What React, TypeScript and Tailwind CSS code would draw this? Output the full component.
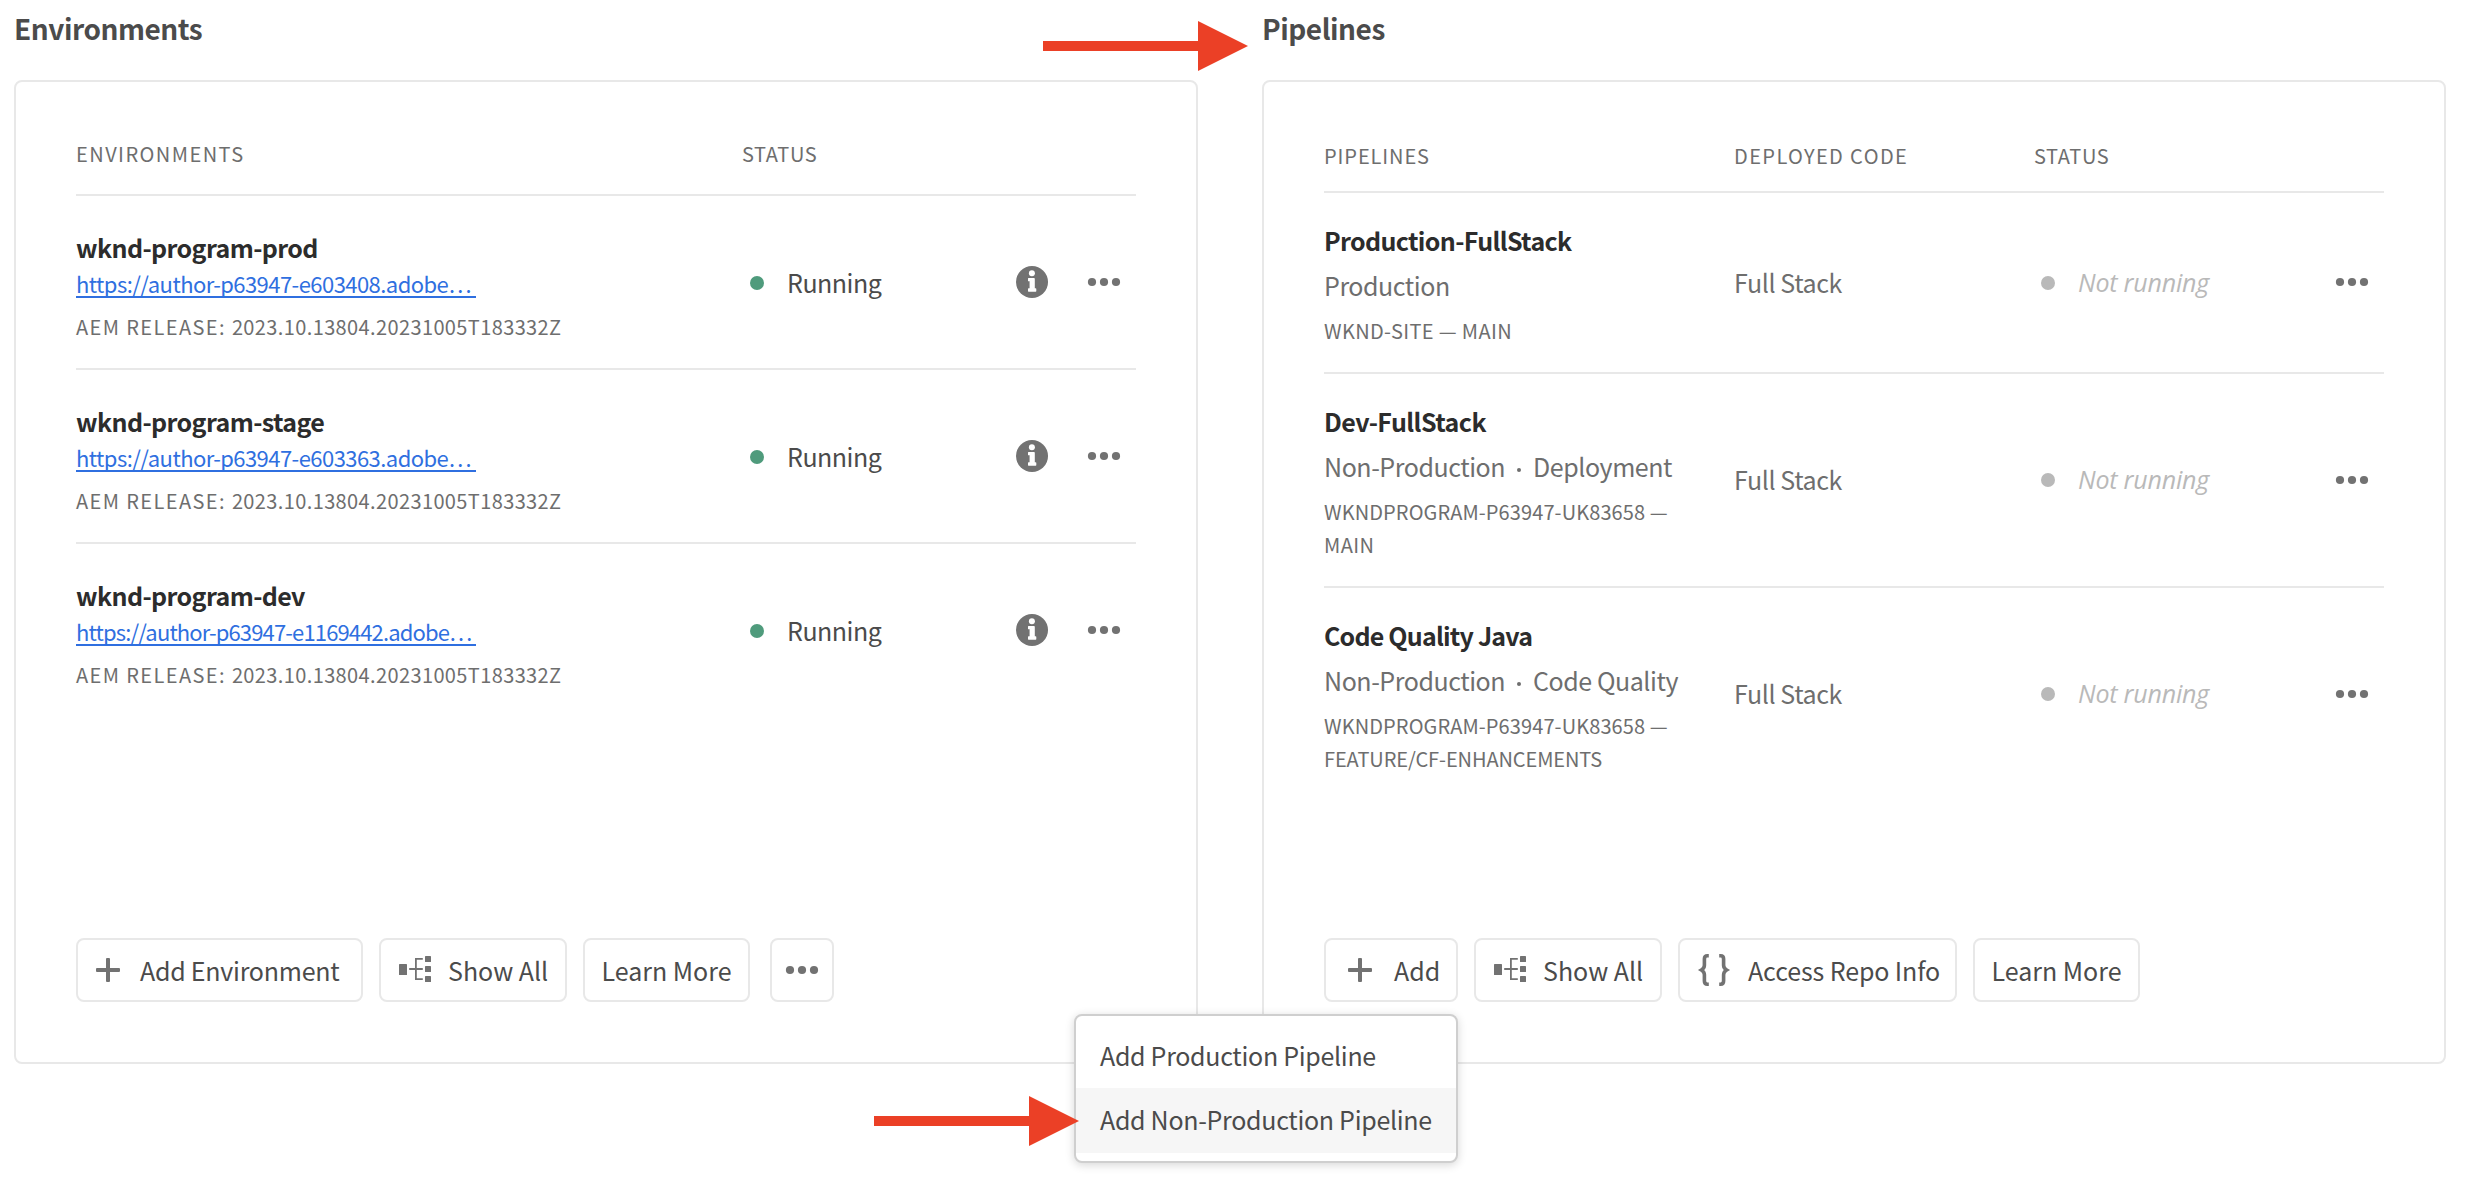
import type { ReactNode } from 'react';

const environments = [
  { name: 'wknd-program-prod', url: 'https://author-p63947-e603408.adobe…', urlTracking: 'tracking-[-0.55px]' },
  { name: 'wknd-program-stage', url: 'https://author-p63947-e603363.adobe…', urlTracking: 'tracking-[-0.55px]' },
  { name: 'wknd-program-dev', url: 'https://author-p63947-e1169442.adobe…', urlTracking: 'tracking-[-0.85px]' },
];

const pipelines = [
  {
    name: 'Production-FullStack',
    nameTracking: 'tracking-[-0.65px]',
    kind: ['Production'],
    repo: [{ text: 'WKND-SITE — MAIN', tracking: 'tracking-[0.35px]' }],
  },
  {
    name: 'Dev-FullStack',
    nameTracking: 'tracking-[-0.55px]',
    kind: ['Non-Production', 'Deployment'],
    repo: [
      { text: 'WKNDPROGRAM-P63947-UK83658 —', tracking: 'tracking-[0.1px]' },
      { text: 'MAIN', tracking: 'tracking-[0.4px]' },
    ],
  },
  {
    name: 'Code Quality Java',
    nameTracking: 'tracking-[-0.8px]',
    kind: ['Non-Production', 'Code Quality'],
    repo: [
      { text: 'WKNDPROGRAM-P63947-UK83658 —', tracking: 'tracking-[0.1px]' },
      { text: 'FEATURE/CF-ENHANCEMENTS', tracking: 'tracking-[-0.1px]' },
    ],
  },
];

function MoreIcon() {
  return (
    <svg width="32" height="8" viewBox="0 0 32 8" fill="#727272" className="shrink-0 overflow-visible">
      <circle cx="4" cy="4" r="4.1" />
      <circle cx="16" cy="4" r="4.1" />
      <circle cx="28" cy="4" r="4.1" />
    </svg>
  );
}

function InfoIcon() {
  return (
    <svg width="32" height="32" viewBox="0 0 32 32" className="shrink-0">
      <circle cx="16" cy="16" r="16" fill="#727272" />
      <circle cx="15.9" cy="7.3" r="3" fill="#fff" />
      <path
        d="M12.6 12h5.4a.8.8 0 0 1 .8.8v9.5h.9a.6.6 0 0 1 .6.6v2.2a.6.6 0 0 1-.6.6h-7.1a.6.6 0 0 1-.6-.6v-2.2a.6.6 0 0 1 .6-.6h1v-7h-1a.6.6 0 0 1-.6-.6v-2.1a.6.6 0 0 1 .6-.6z"
        fill="#fff"
      />
    </svg>
  );
}

function PlusIcon() {
  return (
    <svg width="36" height="36" viewBox="0 0 36 36" fill="#727272" className="shrink-0">
      <rect x="6" y="16" width="24" height="4" rx="1" />
      <rect x="16" y="6" width="4" height="24" rx="1" />
    </svg>
  );
}

function TreeIcon() {
  return (
    <svg width="36" height="36" viewBox="0 0 36 36" fill="#727272" className="shrink-0">
      <rect x="2" y="12" width="8" height="11" rx="0.6" />
      <rect x="28" y="4" width="6" height="6" rx="0.6" />
      <rect x="28" y="14" width="6" height="6" rx="0.6" />
      <rect x="28" y="24" width="6" height="6" rx="0.6" />
      <path d="M12.2 16.1H18V6h7.8v1.8h-6v8.3h6v1.8h-6v8.3h6V28H18V17.9h-5.8z" />
    </svg>
  );
}

function BracesIcon() {
  return (
    <svg width="36" height="36" viewBox="0 0 36 36" fill="none" stroke="#727272" strokeWidth="3.6" className="shrink-0">
      <path d="M12.8 3.8H11.4Q8.4 3.8 8.4 7V13.2Q8.4 16.2 5.4 18Q8.4 19.8 8.4 22.8V29Q8.4 32.2 11.4 32.2H12.8" />
      <path d="M23.2 3.8H24.6Q27.6 3.8 27.6 7V13.2Q27.6 16.2 30.6 18Q27.6 19.8 27.6 22.8V29Q27.6 32.2 24.6 32.2H23.2" />
    </svg>
  );
}

function Button({ className, children }: { className: string; children: ReactNode }) {
  return (
    <button
      className={`flex h-16 shrink-0 items-center whitespace-nowrap rounded-lg border-2 border-[#e8e8e8] text-[25px] leading-8 text-[#4b4b4b] ${className}`}
    >
      {children}
    </button>
  );
}

function Card({ title, children }: { title: string; children: ReactNode }) {
  return (
    <section className="w-[1184px]">
      <h2 className="h-20 pt-3 text-[28px] font-bold leading-8 tracking-[-0.45px] text-[#4b4b4b]">{title}</h2>
      <div className="flex h-[984px] flex-col rounded-lg border-2 border-[#e8e8e8] px-[60px] pb-[60px]">{children}</div>
    </section>
  );
}

function Arrow({ className }: { className: string }) {
  return (
    <svg width="206" height="50" viewBox="0 0 206 50" fill="#eb4026" className={`absolute ${className}`}>
      <path d="M0 20h155V0l50 25-50 25V30H0z" />
    </svg>
  );
}

export default function App() {
  return (
    <main className="relative flex h-[1178px] w-[2468px] gap-16 overflow-hidden bg-white pl-[14px] font-['Noto_Sans_CJK_SC','Noto_Sans',sans-serif]">
      <Card title="Environments">
        <div className="flex h-[114px] items-end border-b-2 border-[#e8e8e8] pb-7 text-xl leading-6 text-[#6e6e6e]">
          <span className="w-[666px] tracking-[1.45px]">ENVIRONMENTS</span>
          <span className="tracking-[0.6px]">STATUS</span>
        </div>
        {environments.map((env) => (
          <div key={env.name} className="flex h-[174px] items-center border-b-2 border-[#e8e8e8] nth-4:border-transparent">
            <div className="w-[666px] self-start pt-[35px]">
              <div className="text-[25px] font-bold leading-8 tracking-[-0.6px] text-[#2c2c2c]">{env.name}</div>
              <a
                className={`mt-1 block h-[31px] w-[400px] whitespace-nowrap border-b-2 border-[#2f6fe0] text-[22px] leading-8 text-[#2f6fe0] ${env.urlTracking}`}
              >
                {env.url}
              </a>
              <div className="mt-[17px] text-xl leading-6 tracking-[0.38px] text-[#6e6e6e]">
                <span className="tracking-[1.4px]">AEM RELEASE: </span>2023.10.13804.20231005T183332Z
              </div>
            </div>
            <span className="mt-0.5 ml-2 size-3.5 rounded-full bg-[#4f9b7c]" />
            <span className="ml-[23px] text-[25px] leading-8 tracking-[-0.5px] text-[#4b4b4b]">Running</span>
            <div className="ml-auto flex items-center gap-10 pr-4">
              <InfoIcon />
              <MoreIcon />
            </div>
          </div>
        ))}
        <div className="mt-auto flex gap-4">
          <Button className="w-[287px] gap-[14px] pl-3">
            <PlusIcon />
            <span className="tracking-[-0.25px]">Add Environment</span>
          </Button>
          <Button className="w-[188px] gap-[15px] pl-4">
            <TreeIcon />
            <span>Show All</span>
          </Button>
          <Button className="w-[167px] justify-center">Learn More</Button>
          <Button className="ml-1 w-16 justify-center">
            <MoreIcon />
          </Button>
        </div>
      </Card>

      <Card title="Pipelines">
        <div className="flex h-[111px] items-end border-b-2 border-[#e8e8e8] pb-[23px] text-xl leading-6 text-[#6e6e6e]">
          <span className="w-[410px] tracking-[0.9px]">PIPELINES</span>
          <span className="w-[300px] tracking-[1.4px]">DEPLOYED CODE</span>
          <span className="tracking-[0.6px]">STATUS</span>
        </div>
        {pipelines.map((p) => (
          <div key={p.name} className="flex items-center border-b-2 border-[#e8e8e8] nth-4:border-transparent">
            <div className="w-[410px] pt-[31px] pb-[25px]">
              <div className={`text-[25px] font-bold leading-8 text-[#2c2c2c] ${p.nameTracking}`}>{p.name}</div>
              <div className="mt-[13px] flex items-center text-[25px] leading-8 tracking-[-0.45px] text-[#6e6e6e]">
                <span>{p.kind[0]}</span>
                {p.kind[1] && (
                  <>
                    <span className="mx-3 mt-2 size-1 rounded-full bg-[#6e6e6e]" />
                    <span>{p.kind[1]}</span>
                  </>
                )}
              </div>
              <div className="mt-[13px] text-xl leading-[33px] text-[#6e6e6e]">
                {p.repo.map((line) => (
                  <div key={line.text} className={line.tracking}>
                    {line.text}
                  </div>
                ))}
              </div>
            </div>
            <span className="w-[300px] pb-0.5 text-[25px] leading-8 tracking-[-0.4px] text-[#6e6e6e]">Full Stack</span>
            <span className="ml-[7px] size-3.5 rounded-full bg-[#b9b9b9]" />
            <span className="ml-[23px] pb-0.5 font-['Open_Sans','Noto_Sans',sans-serif] text-[25px] italic leading-8 tracking-[-0.2px] text-[#b9b9b9]">
              Not running
            </span>
            <div className="ml-auto pr-4 pb-px">
              <MoreIcon />
            </div>
          </div>
        ))}
        <div className="mt-auto flex gap-4">
          <Button className="w-[134px] gap-4 pl-4">
            <PlusIcon />
            <span>Add</span>
          </Button>
          <Button className="w-[188px] gap-[15px] pl-4">
            <TreeIcon />
            <span>Show All</span>
          </Button>
          <Button className="w-[279px] gap-4 pl-4">
            <BracesIcon />
            <span className="tracking-[-0.1px]">Access Repo Info</span>
          </Button>
          <Button className="w-[167px] justify-center">Learn More</Button>
        </div>
      </Card>

      <div className="absolute top-[1014px] left-[1074px] w-96 rounded-lg border-2 border-[#cfcfcf] bg-white py-2 text-[25px] leading-8 tracking-[-0.3px] text-[#4b4b4b] shadow-[0_2px_10px_rgba(0,0,0,0.16)]">
        <div className="flex h-16 items-center pb-0.5 pl-6">Add Production Pipeline</div>
        <div className="flex h-[65px] items-center bg-[#f6f6f6] pb-[3px] pl-6">Add Non-Production Pipeline</div>
      </div>

      <Arrow className="top-[21px] left-[1043px]" />
      <Arrow className="top-[1096px] left-[874px]" />
    </main>
  );
}
